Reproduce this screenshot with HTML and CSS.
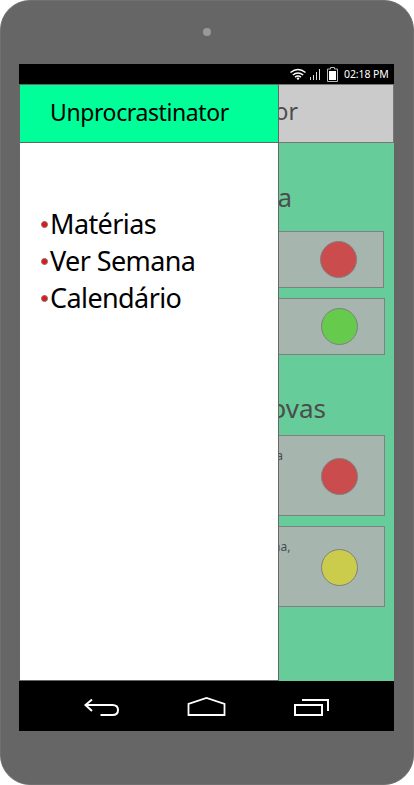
FILE: index.html
```html
<!DOCTYPE html>
<html lang="pt">
<head>
<meta charset="utf-8">
<title>Unprocrastinator</title>
<link rel="stylesheet" href="styles.css">
</head>
<body>
<div class="phone">
  <div class="camera"></div>
  <div class="screen">
    <div class="status">
      <svg class="status-icons" width="50" height="20" viewBox="0 0 50 20" fill="none" stroke="#fff">
        <path d="M1.500 8.500Q9 2.500 16.500 8.500M3.800 11Q9 6.800 14.200 11M6 13.200Q9 10.800 12 13.200" stroke-width="1.500"/>
        <circle cx="9" cy="14.600" r="1.200" fill="#fff" stroke="none"/>
        <path d="M21.500 13v3M24.500 11v5M27.500 8v8M30.500 5v11" stroke="#ddd"/>
        <path d="M41.500 3.500h4v1.500h3v12.500h-10V5h3z" stroke="#bbb"/>
        <path d="M40 7h7v9h-7z" fill="#fff" stroke="none"/>
      </svg>
      <span class="time">02:18 PM</span>
    </div>
    <div class="content">
      <nav class="drawer">
        <h1 class="drawer-title"><span>Unprocrastinator</span></h1>
        <ul class="menu">
          <li><span>Matérias</span></li>
          <li><span>Ver Semana</span></li>
          <li><span>Calendário</span></li>
        </ul>
      </nav>
      <main class="page">
        <header class="bar"><span>or</span></header>
        <h2 class="heading week">a</h2>
        <section class="card short first"><i class="dot red"></i></section>
        <section class="card short"><i class="dot green"></i></section>
        <h2 class="heading exams">ovas</h2>
        <section class="card tall"><p class="note n1">a</p><i class="dot red"></i></section>
        <section class="card tall"><p class="note n2">na,</p><i class="dot yellow"></i></section>
      </main>
    </div>
    <div class="navbar">
      <svg width="375" height="50" viewBox="0 0 375 50" fill="none" stroke="#fff" stroke-width="2">
        <path d="M73 18.500L66.500 24l6.500 6M66.500 24h27q5.500 0 5.500 5t-5.500 5h-12"/>
        <path d="M169.500 34V23l18-6 18 6v11z" stroke-width="1.800"/>
        <path d="M276 24h27v10h-27zM283 19h26v11"/>
      </svg>
    </div>
  </div>
</div>
</body>
</html>
```
FILE: styles.css
```css
* { box-sizing: border-box; margin: 0; padding: 0; }
body { background: #fff; font-family: "Noto Sans", "Open Sans", sans-serif; }
.phone { width: 414px; height: 785px; background: #666; border: 1px solid #707070; border-radius: 30px; overflow: hidden; padding: 27px 18px 0; }
.camera { width: 8px; height: 8px; margin-left: 184px; border-radius: 50%; background: #999; }
.screen { width: 375px; margin-top: 28px; }
.status { height: 20px; background: #000; color: #fff; display: flex; justify-content: flex-end; align-items: center; padding-right: 5px; gap: 5px; }
.time { width: 45px; font-size: 10.500px; line-height: 20px; letter-spacing: -0.100px; white-space: nowrap; }
.content { height: 597px; display: grid; grid-template-columns: 260px 115px; }
.drawer { background: #fff; border: 1px solid #666; }
.drawer-title { height: 58px; background: #00ff99; border-bottom: 1px solid #666; padding-left: 30px; font-size: 23px; font-weight: 400; line-height: 55px; letter-spacing: -0.400px; white-space: nowrap; }
.menu { list-style: none; padding: 63px 0 0 21px; }
.menu li { height: 37px; display: flex; align-items: center; gap: 3px; font-size: 27px; line-height: 37px; letter-spacing: -0.600px; white-space: nowrap; }
.menu li span { margin: 0 0 2px -1px; }
.menu li::before { content: ""; width: 5px; height: 5px; border-radius: 50%; background: #e01818; border: 1px solid #867070; }
.page { background: #66cc99; overflow: hidden; color: #4c4c4c; }
.bar { height: 59px; background: #cbcbcb; border: 1px solid #777; border-left: 0; font-size: 23px; line-height: 53px; }
.bar span { display: block; width: 19px; direction: rtl; white-space: nowrap; }
.heading { font-size: 26px; font-weight: 400; line-height: 36px; direction: rtl; white-space: nowrap; }
.week { width: 13px; margin-top: 36px; }
.exams { width: 47px; margin-top: 35px; }
.card { width: 106px; background: #a6b5ae; border: 1px solid #808080; border-left: 0; display: flex; align-items: center; justify-content: flex-end; padding-right: 26px; margin-bottom: 10px; }
.short { height: 57px; }
.tall { height: 81px; padding-top: 2px; }
.first { width: 105px; margin-top: 16px; }
.exams + .card { margin-top: 9px; }
.note { align-self: flex-start; margin: 10px auto 0 0; font-size: 12px; line-height: 16px; direction: rtl; white-space: nowrap; }
.n1 { width: 4px; }
.n2 { width: 12px; direction: ltr; text-indent: -6px; }
.dot { flex: none; width: 37px; height: 37px; border: 1px solid #808080; border-radius: 50%; }
.red { background: #cb4c4c; }
.green { background: #66cb4c; }
.yellow { background: #cbcb4c; }
.navbar { height: 50px; background: #000; }
.navbar svg { display: block; }
```
